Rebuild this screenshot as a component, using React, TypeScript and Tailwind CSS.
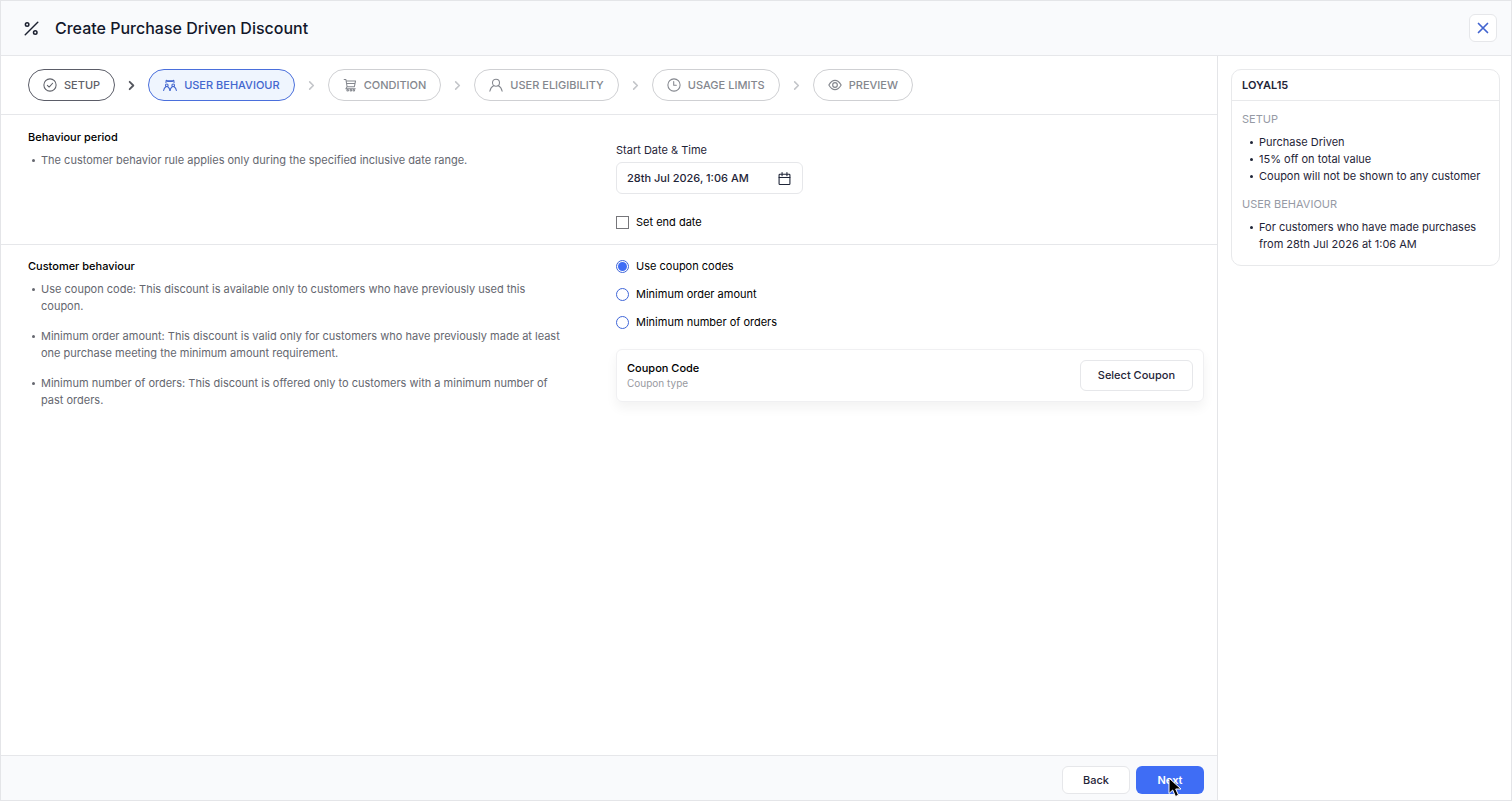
import { useState } from 'react';
import type { ReactNode } from 'react';

type StepState = 'done' | 'active' | 'todo';

type IconProps = { children: ReactNode; className?: string; viewBox?: string; strokeWidth?: number };

function Icon({ children, className = 'size-3.5', viewBox = '0 0 24 24', strokeWidth = 1.8 }: IconProps) {
  return (
    <svg
      aria-hidden="true"
      viewBox={viewBox}
      className={`shrink-0 ${className}`}
      fill="none"
      stroke="currentColor"
      strokeWidth={strokeWidth}
      strokeLinecap="round"
      strokeLinejoin="round"
    >
      {children}
    </svg>
  );
}

const CheckCircleIcon = () => (
  <Icon>
    <circle cx="12" cy="12" r="10.5" />
    <path d="M7.5 12.500l3 3 6-6.500" />
  </Icon>
);

const UsersIcon = () => (
  <Icon>
    <circle cx="6.500" cy="12.500" r="2.300" />
    <path d="M1 21.500c.5-3 2-5 3.800-6.500M12 21.500c-.5-3-2-5-3.800-6.500" />
    <circle cx="17.500" cy="12.500" r="2.300" />
    <path d="M12 21.500c.5-3 2-5 3.800-6.500M23 21.500c-.5-3-2-5-3.800-6.500" />
    <path d="M5 8l.5-4 3 1.500M19 8l-.5-4-3 1.500" />
    <path d="M8.500 5.500h7" strokeWidth={3} />
  </Icon>
);

const CartIcon = () => (
  <Icon>
    <path d="M2 2.500h3l2 12.500h12.500L21.500 5H5.500M6 9.500h14M7 15l-2 3.500h16" />
    <circle cx="8" cy="21" r="1.400" />
    <circle cx="13.500" cy="21" r="1.400" />
    <circle cx="18.500" cy="21" r="1.400" />
  </Icon>
);

const PersonIcon = () => (
  <Icon>
    <circle cx="12" cy="8" r="6" />
    <path d="M1.500 22.500c1-5 3.500-8 7-9.500M22.500 22.500c-1-5-3.500-8-7-9.500" />
  </Icon>
);

const ClockIcon = () => (
  <Icon>
    <circle cx="12" cy="12" r="10.500" />
    <path d="M11.500 6v6.500H16" />
  </Icon>
);

const EyeIcon = () => (
  <Icon strokeWidth={2}>
    <path d="M1.500 12C4 7.500 7.500 4 12 4s8 3.500 10.500 8c-2.500 4.500-6 8-10.500 8S4 16.500 1.500 12z" />
    <circle cx="12" cy="12" r="4" />
  </Icon>
);

const CalendarIcon = () => (
  <Icon className="size-[13px]" strokeWidth={2}>
    <rect x="2" y="4" width="20" height="19" rx="1.500" />
    <path d="M2 10h20M7.500 1v6M16.500 1v6" />
  </Icon>
);

const steps: { label: string; state: StepState; icon: ReactNode }[] = [
  { label: 'SETUP', state: 'done', icon: <CheckCircleIcon /> },
  { label: 'USER BEHAVIOUR', state: 'active', icon: <UsersIcon /> },
  { label: 'CONDITION', state: 'todo', icon: <CartIcon /> },
  { label: 'USER ELIGIBILITY', state: 'todo', icon: <PersonIcon /> },
  { label: 'USAGE LIMITS', state: 'todo', icon: <ClockIcon /> },
  { label: 'PREVIEW', state: 'todo', icon: <EyeIcon /> },
];

const stepStyles: Record<StepState, string> = {
  done: 'border-[#5b5d68] text-[#5f6169]',
  active: 'border-[#4a6fdc] bg-[#eff5fe] text-[#4367cf]',
  todo: 'border-[#cfd0d3] text-[#84878e]',
};

function Stepper() {
  return (
    <nav aria-label="Steps" className="border-b border-[#e6e7ea] px-[27px] py-[13px]">
      <ol className="flex items-center">
        {steps.map((step, i) => (
          <li key={step.label} className="flex items-center">
            {i > 0 && (
              <Icon
                className={i === 1 ? 'mx-[11px] size-[11px] text-[#55575f]' : 'mx-[11px] size-[11px] text-[#c3c5c9]'}
                strokeWidth={i === 1 ? 4 : 3.4}
              >
                <path d="M8 4l8 8-8 8" />
              </Icon>
            )}
            <button
              type="button"
              aria-current={step.state === 'active' ? 'step' : undefined}
              className={`flex h-8 items-center gap-[7px] rounded-full border px-3.5 text-[11px] font-medium whitespace-nowrap ${stepStyles[step.state]}`}
            >
              {step.icon}
              {step.label}
            </button>
          </li>
        ))}
      </ol>
    </nav>
  );
}

function Notes({ items }: { items: string[] }) {
  return (
    <ul className="mt-1.5 space-y-[13px] text-[#65676f]">
      {items.map((text) => (
        <li key={text} className="flex gap-1.5">
          <span aria-hidden="true" className="mt-[7px] ml-1 size-[3px] shrink-0 rounded-full bg-current" />
          <span>{text}</span>
        </li>
      ))}
    </ul>
  );
}

function SummaryGroup({ title, items }: { title: string; items: string[] }) {
  return (
    <section>
      <h3 className="text-[#969aa5]">{title}</h3>
      <ul className="mt-1.5">
        {items.map((text) => (
          <li key={text} className="flex gap-1.5">
            <span aria-hidden="true" className="mt-[7px] ml-2 size-[3px] shrink-0 rounded-full bg-current" />
            <span>{text}</span>
          </li>
        ))}
      </ul>
    </section>
  );
}

const rules = ['Use coupon codes', 'Minimum order amount', 'Minimum number of orders'];

export default function App() {
  const [rule, setRule] = useState(rules[0]);
  const [hasEnd, setHasEnd] = useState(false);

  return (
    <div className="flex min-h-screen flex-col border border-[#e4e5e8] bg-white font-['Inter',sans-serif] text-[11px] leading-[17px] text-[#1f2538]">
      <header className="flex items-center justify-between border-b border-[#e6e7ea] bg-[#f9fafc] py-[13px] pr-3.5 pl-[23px]">
        <div className="flex items-center gap-4">
          <Icon className="size-[15px] text-[#1c2130]" strokeWidth={2.4}>
            <path d="M22 2L2 22" />
            <circle cx="5" cy="5.500" r="2.800" />
            <circle cx="18" cy="18.500" r="2.800" />
          </Icon>
          <h1 className="text-base font-medium text-[#12172a]">Create Purchase Driven Discount</h1>
        </div>
        <button
          type="button"
          aria-label="Close"
          className="flex size-7 items-center justify-center rounded-md border border-[#e6e7ea] bg-white text-[#4264d0]"
        >
          <Icon className="size-3" strokeWidth={3.4}>
            <path d="M3 3l18 18M21 3L3 21" />
          </Icon>
        </button>
      </header>

      <div className="flex grow">
        <main className="flex min-w-0 grow flex-col border-r border-[#e4e5e8]">
          <Stepper />

          <section className="grid grid-cols-2 border-b border-[#e6e7ea] pt-3.5 pr-[13px] pb-[13px] pl-[27px]">
            <div className="pr-12">
              <h2 className="font-medium text-black">Behaviour period</h2>
              <Notes items={['The customer behavior rule applies only during the specified inclusive date range.']} />
            </div>
            <div className="flex flex-col items-start pt-[13px]">
              <label htmlFor="start-date">Start Date &amp; Time</label>
              <div className="mt-[3px] flex h-8 w-[187px] items-center rounded-md border border-[#e6e7ea] pr-[11px]">
                <input
                  id="start-date"
                  type="text"
                  defaultValue="28th Jul 2026, 1:06 AM"
                  className="h-full min-w-0 grow bg-transparent pl-2.5 font-medium outline-none"
                />
                <CalendarIcon />
              </div>
              <label className="mt-5 flex items-center gap-[7px] text-black">
                <input
                  type="checkbox"
                  checked={hasEnd}
                  onChange={(e) => setHasEnd(e.target.checked)}
                  className="size-[13px] appearance-none border border-[#76767a] bg-white checked:bg-[#3f6df5]"
                />
                Set end date
              </label>
            </div>
          </section>

          <section className="grid grid-cols-2 pt-[13px] pr-[13px] pl-[27px]">
            <div className="pr-12">
              <h2 className="font-medium text-black">Customer behaviour</h2>
              <Notes
                items={[
                  'Use coupon code: This discount is available only to customers who have previously used this coupon.',
                  'Minimum order amount: This discount is valid only for customers who have previously made at least one purchase meeting the minimum amount requirement.',
                  'Minimum number of orders: This discount is offered only to customers with a minimum number of past orders.',
                ]}
              />
            </div>
            <div>
              <div role="radiogroup" aria-label="Customer behaviour" className="flex flex-col items-start gap-[11px] text-black">
                {rules.map((name) => (
                  <label key={name} className="flex items-center gap-[7px]">
                    <input
                      type="radio"
                      name="rule"
                      checked={rule === name}
                      onChange={() => setRule(name)}
                      className="size-[13px] appearance-none rounded-full border border-[#3f66d8] bg-white checked:bg-[#3f6df5] checked:bg-clip-content checked:p-px"
                    />
                    {name}
                  </label>
                ))}
              </div>
              <div className="mt-[18px] flex items-center justify-between rounded-md border border-[#f0f0f2] p-2.5 shadow-[0_6px_12px_rgba(0,0,0,0.05)]">
                <div>
                  <p className="leading-4 font-medium text-black">Coupon Code</p>
                  <p className="text-[10px] leading-[15px] text-[#989a9f]">Coupon type</p>
                </div>
                <button type="button" className="h-[31px] rounded-md border border-[#e6e7ea] bg-white px-[17px] font-medium">
                  Select Coupon
                </button>
              </div>
            </div>
          </section>

          <footer className="mt-auto flex justify-end gap-1.5 border-t border-[#e6e7ea] bg-[#f9fafc] pt-2.5 pr-[13px] pb-1.5">
            <button type="button" className="h-7 w-[68px] rounded-md border border-[#e6e7ea] bg-white font-medium">
              Back
            </button>
            <button type="button" className="relative h-7 w-[68px] rounded-md bg-[#3f6df5] font-semibold text-white">
              Next
              <svg aria-hidden="true" viewBox="0 0 14 21" className="absolute top-[11px] left-8 h-[21px] w-3.5">
                <path
                  d="M1 1v15.500l3.700-3.500 2.800 6.500 3-1.300-2.800-6.200h5.300z"
                  fill="#000"
                  stroke="#fff"
                  strokeWidth="1"
                  strokeLinejoin="round"
                />
              </svg>
            </button>
          </footer>
        </main>

        <aside className="w-[293px] shrink-0 py-[13px] pr-[11px] pl-[13px]">
          <div className="rounded-[10px] border border-[#e8e9eb]">
            <h2 className="border-b border-[#e8e9eb] px-2.5 pt-[7px] pb-1.5 font-semibold">LOYAL15</h2>
            <div className="space-y-[11px] px-2.5 pt-2.5 pb-3">
              <SummaryGroup
                title="SETUP"
                items={['Purchase Driven', '15% off on total value', 'Coupon will not be shown to any customer']}
              />
              <SummaryGroup
                title="USER BEHAVIOUR"
                items={['For customers who have made purchases from 28th Jul 2026 at 1:06 AM']}
              />
            </div>
          </div>
        </aside>
      </div>
    </div>
  );
}
